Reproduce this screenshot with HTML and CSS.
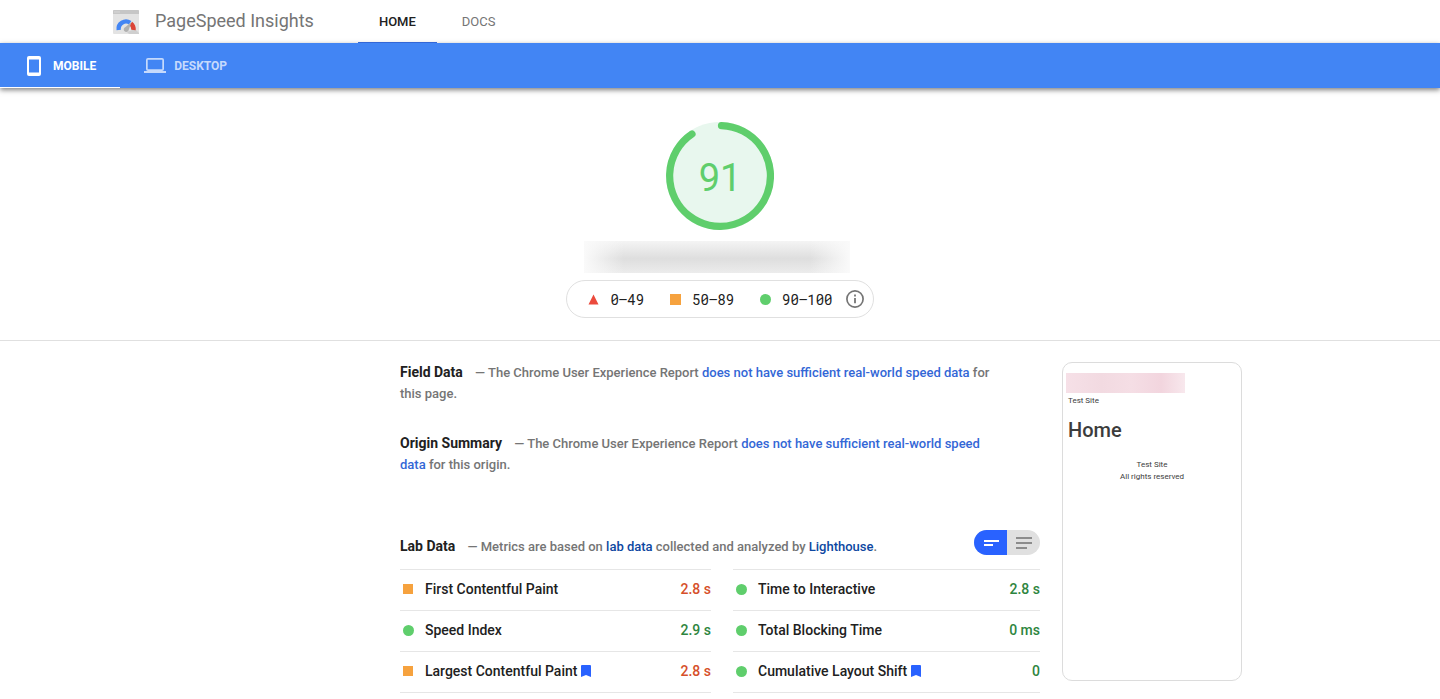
FILE: index.html
```html
<!DOCTYPE html>
<html lang="en">
<head>
<meta charset="utf-8">
<title>PageSpeed Insights</title>
<link rel="stylesheet" href="styles.css">
</head>
<body>
<header class="topbar">
  <a class="brand" href="#">
    <svg class="logo" viewBox="0 0 26 24" aria-hidden="true">
      <rect width="26" height="24" rx="1" fill="#e3e3e3"/>
      <path d="M0 1a1 1 0 0 1 1-1h24a1 1 0 0 1 1 1v3H0z" fill="#c6c6c6"/>
      <path d="M1.500 2h1M3.500 2h1M5.500 2h1" stroke="#e8e8e8" stroke-width="1"/>
      <path d="M14 22l8-3 4 4v1H16z" fill="#cfcfcf"/>
      <path d="M5.700 20a7.400 7.400 0 0 1 11.500-7.200" fill="none" stroke="#4285f4" stroke-width="4.400"/>
      <path d="M17.800 13.500a7.400 7.400 0 0 1 2.700 6.500" fill="none" stroke="#db4437" stroke-width="4.400"/>
      <path d="M18.500 12l-2.800 8a2.500 2.500 0 1 1-3.200-3z" fill="#b0b0b0"/>
    </svg>
    <span class="brand-name">PageSpeed Insights</span>
  </a>
  <nav class="site-nav">
    <a class="nav-link active" href="#">HOME</a>
    <a class="nav-link" href="#">DOCS</a>
  </nav>
</header>

<nav class="devices">
  <button class="device active" type="button">
    <svg class="device-icon phone" viewBox="0 0 14 20" aria-hidden="true"><path fill="currentColor" fill-rule="evenodd" d="M2 0h10a2 2 0 0 1 2 2v16a2 2 0 0 1-2 2H2a2 2 0 0 1-2-2V2a2 2 0 0 1 2-2zm0 3.500v13h10v-13z"/></svg>
    MOBILE
  </button>
  <button class="device" type="button">
    <svg class="device-icon laptop" viewBox="0 0 22 16" aria-hidden="true"><path fill="currentColor" fill-rule="evenodd" d="M4 0h14a2 2 0 0 1 2 2v9a2 2 0 0 1-2 2h4v2H0v-2h4a2 2 0 0 1-2-2V2a2 2 0 0 1 2-2zm-.300 1.800v9.500h14.600v-9.500z"/></svg>
    DESKTOP
  </button>
</nav>

<main>
  <section class="score">
    <div class="gauge">
      <svg class="gauge-ring" viewBox="0 0 108 108" aria-hidden="true">
        <circle cx="54" cy="54" r="54" fill="#e8f7ee"/>
        <path d="M55.500 3.600A50.400 50.400 0 1 1 26 12.100" fill="none" stroke="#5fce6c" stroke-width="7.200" stroke-linecap="round"/>
      </svg>
      <span class="gauge-value">91</span>
    </div>
    <div class="page-address"></div>
    <div class="legend">
      <span class="range"><svg class="mark" viewBox="0 0 11 11" aria-hidden="true"><path d="M5.500 .500l5 10h-10z" fill="#eb4a3c"/></svg>0–49</span>
      <span class="range"><svg class="mark" viewBox="0 0 11 11" aria-hidden="true"><path d="M0 0h11v11H0z" fill="#f6a23e"/></svg>50–89</span>
      <span class="range"><svg class="mark" viewBox="0 0 11 11" aria-hidden="true"><circle cx="5.500" cy="5.500" r="5.500" fill="#5fce6c"/></svg>90–100</span>
      <button class="info" type="button" aria-label="About the scale"><svg viewBox="0 0 18 18" aria-hidden="true"><circle cx="9" cy="9" r="8.100" fill="none" stroke="#757575" stroke-width="1.700"/><path d="M8.100 4.600h1.800v1.800H8.100zM8.100 8h1.800v5.200H8.100z" fill="#757575"/></svg></button>
    </div>
  </section>

  <div class="report">
    <div class="results">
      <section class="summary">
        <h2>Field Data</h2>
        <p>— The Chrome User Experience Report <a href="#">does not have sufficient real-world speed data</a> for this page.</p>
      </section>
      <section class="summary">
        <h2>Origin Summary</h2>
        <p>— The Chrome User Experience Report <a href="#">does not have sufficient real-world speed data</a> for this origin.</p>
      </section>
      <section class="lab">
        <div class="lab-head">
          <div class="lab-title">
            <h2>Lab Data</h2>
            <p>— Metrics are based on <a href="#">lab data</a> collected and analyzed by <a href="#">Lighthouse</a>.</p>
          </div>
          <div class="view-switch">
            <button class="view on" type="button" aria-label="Compact view"><svg viewBox="0 0 16 12" aria-hidden="true"><path d="M1 4h15M1 8h9" stroke="#fff" stroke-width="1.800"/></svg></button>
            <button class="view" type="button" aria-label="Detailed view"><svg viewBox="0 0 16 12" aria-hidden="true"><path d="M0 1h16M0 6h16M0 11h11" stroke="#8c8c8c" stroke-width="1.800"/></svg></button>
          </div>
        </div>
        <div class="metrics">
          <dl class="metric-list">
            <div class="metric"><dt class="square">First Contentful Paint</dt><dd class="average">2.8 s</dd></div>
            <div class="metric"><dt class="dot">Speed Index</dt><dd>2.9 s</dd></div>
            <div class="metric"><dt class="square">Largest Contentful Paint<svg class="flag" viewBox="0 0 10 12" aria-hidden="true"><path d="M0 1a1 1 0 0 1 1-1h8a1 1 0 0 1 1 1v11l-5-2-5 2z" fill="#2962ff"/></svg></dt><dd class="average">2.8 s</dd></div>
          </dl>
          <dl class="metric-list">
            <div class="metric"><dt class="dot">Time to Interactive</dt><dd>2.8 s</dd></div>
            <div class="metric"><dt class="dot">Total Blocking Time</dt><dd>0 ms</dd></div>
            <div class="metric"><dt class="dot">Cumulative Layout Shift<svg class="flag" viewBox="0 0 10 12" aria-hidden="true"><path d="M0 1a1 1 0 0 1 1-1h8a1 1 0 0 1 1 1v11l-5-2-5 2z" fill="#2962ff"/></svg></dt><dd>0</dd></div>
          </dl>
        </div>
      </section>
    </div>
    <aside class="preview">
      <div class="preview-banner"></div>
      <p class="preview-site">Test Site</p>
      <h3>Home</h3>
      <p class="preview-footer">Test Site<br>All rights reserved</p>
    </aside>
  </div>
</main>
</body>
</html>
```

FILE: styles.css
```css
* { box-sizing: border-box; }
body {
  margin: 0;
  background: #fff;
  color: #212121;
  font-family: Roboto, "Liberation Sans", sans-serif;
  font-size: 13px;
}
a { text-decoration: none; }
button { padding: 0; border: 0; background: none; font: inherit; cursor: pointer; }
h2, h3, p, dl, dd { margin: 0; }
svg { display: block; }

.topbar { display: flex; height: 43px; padding-left: 113px; }
.brand { display: flex; align-items: center; gap: 16px; color: #757575; }
.logo { width: 26px; height: 24px; }
.brand-name { padding-bottom: 2px; font-size: 18px; font-weight: 400; line-height: 24px; }
.site-nav { display: flex; margin-left: 44px; }
.nav-link {
  display: flex;
  align-items: center;
  padding: 1px 21px 0;
  border-bottom: 1px solid transparent;
  color: #757575;
}
.nav-link + .nav-link { padding-left: 25px; }
.nav-link.active { border-color: #3367d6; color: #212121; font-weight: 500; }

.devices {
  display: flex;
  height: 45px;
  background: #4285f4;
  box-shadow: 0 2px 5px rgba(0, 0, 0, .5);
}
.device {
  display: flex;
  align-items: center;
  gap: 12px;
  padding: 1px 24px 0;
  border-bottom: 1px solid transparent;
  color: #c6dafc;
  font-size: 12px;
  font-weight: 700;
}
.device.active { border-color: #fff; color: #fff; padding-left: 27px; }
.device-icon.phone { width: 14px; height: 20px; }
.device-icon.laptop { width: 22px; height: 16px; margin-right: -4px; }

.score {
  display: flex;
  flex-direction: column;
  align-items: center;
  padding: 34px 0 22px;
  border-bottom: 1px solid #e0e0e0;
}
.gauge { display: grid; place-items: center; }
.gauge-ring, .gauge-value { grid-area: 1 / 1; }
.gauge-ring { width: 108px; height: 108px; }
.gauge-value { padding-top: 4px; color: #5fce6c; font-size: 38px; line-height: 44px; }
.page-address {
  width: 266px;
  height: 32px;
  margin: 11px 6px 7px 0;
  background:
    linear-gradient(90deg, #fafafa 0, rgba(250, 250, 250, 0) 15%, rgba(250, 250, 250, 0) 85%, #fafafa 100%),
    linear-gradient(180deg, #f4f4f4 0, #dedede 55%, #ececec 100%);
}
.legend {
  display: flex;
  align-items: center;
  gap: 26px;
  height: 38px;
  padding: 0 9px 0 21px;
  border: 1px solid #e0e0e0;
  border-radius: 19px;
  font-family: "Roboto Mono", "Liberation Mono", monospace;
  font-size: 14px;
}
.range { display: flex; align-items: center; gap: 11px; }
.mark { width: 11px; height: 11px; }
.info { margin-left: -13px; }
.info svg { width: 18px; height: 18px; }

.report {
  display: grid;
  grid-template-columns: 1fr minmax(0, 640px) 1fr;
  align-items: start;
  column-gap: 22px;
  padding-top: 21px;
}
.results { grid-column: 2; }
h2 { display: inline; margin-right: 9px; font-size: 14px; font-weight: 700; }
.summary { max-width: 600px; margin-bottom: 29px; line-height: 21px; color: #757575; }
.summary p, .lab-title p { display: inline; font-weight: 500; }
.summary h2, .lab-title h2 { color: #212121; }
.summary a { color: #3367d6; }
.lab { padding-top: 26px; }
.lab-head { display: flex; justify-content: space-between; align-items: flex-start; padding-bottom: 12px; }
.lab-title { padding-top: 6px; line-height: 21px; color: #757575; }
.lab-title a { color: #0d47a1; }
.view-switch { display: flex; overflow: hidden; border-radius: 13px; background: #e0e0e0; }
.view { display: grid; place-items: center; width: 33px; height: 25px; }
.view svg { width: 16px; height: 12px; }
.view.on { background: #2962ff; }

.metrics { display: grid; grid-template-columns: 311fr 307fr; gap: 22px; }
.metric-list { border-bottom: 1px solid #e6e6e6; font-size: 14px; font-weight: 500; }
.metric {
  display: flex;
  align-items: center;
  justify-content: space-between;
  height: 41px;
  padding-bottom: 2px;
  border-top: 1px solid #e6e6e6;
}
dt { display: flex; align-items: center; }
dt::before { content: ""; width: 10px; height: 10px; margin: 0 12px 0 3px; background: #f6a23e; }
dt.dot::before { width: 11px; height: 11px; margin-right: 11px; border-radius: 50%; background: #5fce6c; }
dd { color: #2e8540; }
dd.average { color: #d64f2a; }
.flag { width: 10px; height: 12px; margin-left: 4px; }

.preview {
  width: 180px;
  min-height: 319px;
  padding: 10px 3px;
  border: 1px solid #dcdcdc;
  border-radius: 10px;
  color: #3c3c3c;
  font-size: 8px;
  line-height: 12px;
}
.preview-banner { width: 119px; height: 20px; background: linear-gradient(90deg, #f6e0e7, #f2dae1 30%, #f5dee5 55%, #f2d5de 80%, #f8e8ed); }
.preview-site { padding: 2px 2px 0; }
.preview h3 { margin: 10px 2px 16px; font-size: 20px; font-weight: 500; line-height: 26px; }
.preview-footer { text-align: center; }
```
